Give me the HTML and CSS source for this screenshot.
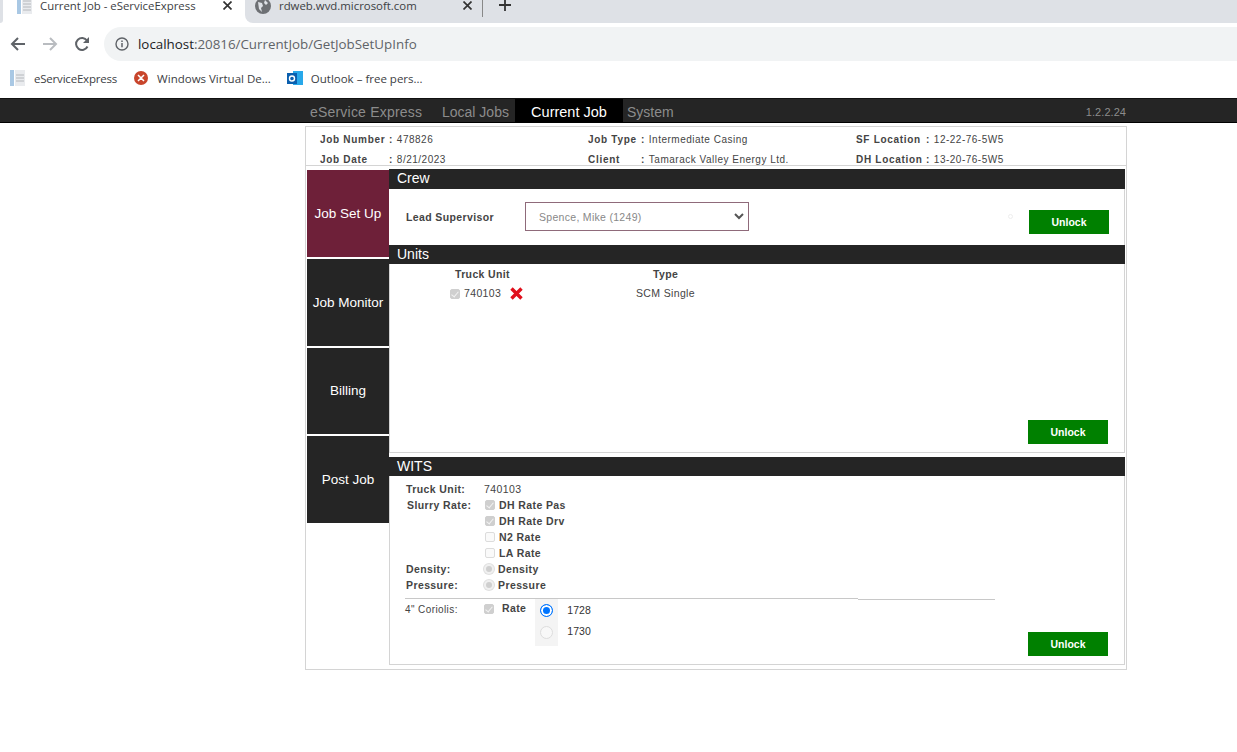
FILE: index.html
```html
<!DOCTYPE html>
<html lang="en">
<head>
  <meta charset="UTF-8">
  <title>Current Job - eServiceExpress</title>
  <link rel="stylesheet" href="styles.css">
</head>
<body>

  <div class="tabstrip">
    <span class="tab-edge"></span>
    <div class="tab active">
      <svg class="page-ico" width="15" height="18" viewBox="0 0 15 18"><rect x="0" y="0" width="4" height="18" fill="#a9c8e4"/><rect x="5" y="0" width="10" height="18" fill="#e9ebee"/><path d="M6 5h8M6 8h8M6 11h8M6 14h8" stroke="#b5b8bc"/></svg>
      <span class="tab-title">Current Job - eServiceExpress</span>
      <svg class="tab-x" width="9" height="9" viewBox="0 0 9 9"><path d="M.5.5l8 8M8.5.5l-8 8" stroke="#333" stroke-width="1.7"/></svg>
    </div>
    <div class="tab other">
      <svg class="globe" width="16" height="16" viewBox="0 0 16 16"><circle cx="8" cy="8" r="8" fill="#6d7074"/><path d="M3 4l4 1 1 3-2 2 1 4-3-3zM10 2l3 3-2 2-2-2z" fill="#dee1e6"/></svg>
      <span class="tab-title">rdweb.wvd.microsoft.com</span>
      <svg class="tab-x" width="9" height="9" viewBox="0 0 9 9"><path d="M.5.5l8 8M8.5.5l-8 8" stroke="#333" stroke-width="1.7"/></svg>
    </div>
    <div class="tab-rest">
      <span class="tab-sep"></span>
      <svg class="newtab" width="14" height="14" viewBox="0 0 14 14"><path d="M7 1v12M1 7h12" stroke="#333" stroke-width="1.8"/></svg>
    </div>
  </div>

  <div class="toolbar">
    <svg width="16" height="16" viewBox="0 0 16 16"><path d="M15 8H2M8 2L2 8l6 6" fill="none" stroke="#5f6368" stroke-width="2"/></svg>
    <svg width="16" height="16" viewBox="0 0 16 16"><path d="M1 8h13M8 2l6 6-6 6" fill="none" stroke="#b9bcc0" stroke-width="2"/></svg>
    <svg width="16" height="16" viewBox="0 0 16 16"><path d="M13.5 10.5A6 6 0 1 1 13 4.5" fill="none" stroke="#5f6368" stroke-width="2"/><path d="M15 1v6H9z" fill="#5f6368"/></svg>
    <div class="omnibox">
      <svg width="14" height="14" viewBox="0 0 14 14"><circle cx="7" cy="7" r="6" fill="none" stroke="#5f6368" stroke-width="1.4"/><path d="M7 6v4.2M7 3.4v1.5" stroke="#5f6368" stroke-width="1.5"/></svg>
      <span class="url"><b>localhost</b>:20816/CurrentJob/GetJobSetUpInfo</span>
    </div>
  </div>

  <div class="bookmarks">
    <span class="bm bm-first">
      <svg width="15" height="16" viewBox="0 0 15 16"><rect x="0" y="0" width="4" height="16" fill="#a9c8e4"/><rect x="5" y="0" width="10" height="16" fill="#e9ebee"/><path d="M6 5h8M6 8h8M6 11h8" stroke="#b5b8bc"/></svg>
      eServiceExpress
    </span>
    <span class="bm">
      <svg width="14" height="14" viewBox="0 0 14 14"><circle cx="7" cy="7" r="7" fill="#c8452b"/><path d="M4 4l3 3-3 3M10 4L7 7l3 3" fill="none" stroke="#fff" stroke-width="1.5"/></svg>
      Windows Virtual De...
    </span>
    <span class="bm bm-last">
      <svg width="16" height="16" viewBox="0 0 16 16"><rect x="6" y="1" width="10" height="14" fill="#28a8ea"/><rect x="0" y="3" width="10" height="11" fill="#0a5fae"/><circle cx="5" cy="8.5" r="2.5" fill="none" stroke="#fff" stroke-width="1.4"/></svg>
      Outlook – free pers...
    </span>
  </div>

  <nav class="appbar">
    <div class="appbar-inner">
      <a class="brand">eService Express</a>
      <a class="nav-local">Local Jobs</a>
      <a class="nav-current">Current Job</a>
      <a class="nav-system">System</a>
      <span class="version">1.2.2.24</span>
    </div>
  </nav>

  <div class="page">
    <div class="jobinfo">
      <div class="info-col col-a">
        <div class="info-row"><label>Job Number</label><i>:</i><span>478826</span></div>
        <div class="info-row"><label>Job Date</label><i>:</i><span>8/21/2023</span></div>
      </div>
      <div class="info-col col-b">
        <div class="info-row"><label>Job Type</label><i>:</i><span>Intermediate Casing</span></div>
        <div class="info-row"><label>Client</label><i>:</i><span>Tamarack Valley Energy Ltd.</span></div>
      </div>
      <div class="info-col col-c">
        <div class="info-row"><label>SF Location</label><i>:</i><span>12-22-76-5W5</span></div>
        <div class="info-row"><label>DH Location</label><i>:</i><span>13-20-76-5W5</span></div>
      </div>
    </div>

    <div class="main">
      <aside class="sidemenu">
        <a class="side-item selected">Job Set Up</a>
        <a class="side-item">Job Monitor</a>
        <a class="side-item">Billing</a>
        <a class="side-item">Post Job</a>
      </aside>

      <div class="panels">
        <section class="panel crew">
          <h3>Crew</h3>
          <div class="crew-body">
            <label class="lead-label">Lead Supervisor</label>
            <div class="fake-select">Spence, Mike (1249)
              <svg width="10" height="7" viewBox="0 0 10 7"><path d="M1 1l4 4 4-4" fill="none" stroke="#555" stroke-width="2"/></svg>
            </div>
            <span class="dot"></span>
            <button class="unlock">Unlock</button>
          </div>
        </section>

        <section class="panel units">
          <h3>Units</h3>
          <div class="units-body">
            <div class="units-grid">
              <b class="th-unit">Truck Unit</b>
              <b class="th-type">Type</b>
              <div class="unit-cell">
                <span class="chk on"></span>740103
                <svg class="red-x" width="13" height="13" viewBox="0 0 13 13"><path d="M1.5 1.5l10 10M11.5 1.5l-10 10" stroke="#e0101c" stroke-width="3.4"/></svg>
              </div>
              <div class="type-cell">SCM Single</div>
            </div>
            <div class="btn-row"><button class="unlock">Unlock</button></div>
          </div>
        </section>

        <section class="panel wits">
          <h3>WITS</h3>
          <div class="wits-body">
            <div class="wits-grid">
              <b class="w-label">Truck Unit:</b><span class="w-plain">740103</span>
              <b class="w-label w-slurry">Slurry Rate:</b><b class="w-opt"><span class="chk on"></span>DH Rate Pas</b>
              <span></span><b class="w-opt"><span class="chk on"></span>DH Rate Drv</b>
              <span></span><b class="w-opt"><span class="chk"></span>N2 Rate</b>
              <span></span><b class="w-opt"><span class="chk"></span>LA Rate</b>
              <b class="w-label">Density:</b><b class="w-opt"><span class="rad"></span>Density</b>
              <b class="w-label">Pressure:</b><b class="w-opt"><span class="rad"></span>Pressure</b>
            </div>
            <div class="rule"><span></span><span></span></div>
            <div class="coriolis">
              <span class="cor-label">4" Coriolis:</span>
              <span class="chk on"></span>
              <b class="cor-rate">Rate</b>
              <div class="radio-box">
                <span class="big-radio on"></span>
                <span class="big-radio"></span>
              </div>
              <div class="radio-names"><span>1728</span><span>1730</span></div>
              <button class="unlock">Unlock</button>
            </div>
          </div>
        </section>
      </div>
    </div>
  </div>

</body>
</html>
```

FILE: styles.css
```css
* {
  box-sizing: border-box;
}
body {
  margin: 0;
  background: #fff;
  font-family: "Liberation Sans", Arial, sans-serif;
  font-size: 11px;
  color: #333;
  overflow: hidden;
}

/* browser chrome */
.tabstrip {
  height: 23px;
  background: #fff;
  display: flex;
  align-items: center;
  font-family: "Open Sans", sans-serif;
  font-size: 11.4px;
  color: #3c4043;
}
.tab-edge {
  width: 3px;
  height: 23px;
  background: #dee1e6;
  border-radius: 0 0 3px 0;
}
.tab {
  height: 23px;
  display: flex;
  align-items: center;
}
.tab.active {
  width: 242px;
  padding-left: 14px;
}
.tab.other {
  width: 237px;
  padding-left: 10px;
  background: #dee1e6;
  border-radius: 0 0 0 8px;
}
.page-ico {
  margin-top: -13px;
}
.globe {
  margin-top: -12px;
}
.tab-title {
  margin-left: 8px;
  flex: 1;
  margin-top: -12px;
}
.tab-x {
  margin-top: -12px;
  margin-right: 13px;
}
.tab.other .tab-x {
  margin-right: 10px;
}
.tab-rest {
  flex: 1;
  height: 23px;
  background: #dee1e6;
  display: flex;
  align-items: center;
}
.tab-sep {
  width: 1px;
  height: 17px;
  background: #888;
  margin-top: -6px;
}
.newtab {
  margin-left: 15px;
  margin-top: -13px;
}
.toolbar {
  height: 42px;
  display: flex;
  align-items: center;
  padding-left: 10px;
  gap: 16px;
}
.omnibox {
  flex: 1;
  height: 34px;
  margin-left: -2px;
  background: #f1f3f4;
  border-radius: 17px 0 0 17px;
  display: flex;
  align-items: center;
  padding-left: 11px;
  gap: 9px;
}
.url {
  font-family: "Open Sans", sans-serif;
  font-size: 13.35px;
  color: #5f6368;
}
.url b {
  font-weight: normal;
  color: #202124;
}
.bookmarks {
  height: 33px;
  display: flex;
  align-items: center;
  padding-left: 10px;
  padding-bottom: 7px;
  font-family: "Open Sans", sans-serif;
  font-size: 11.5px;
  color: #3c4043;
}
.bm {
  display: flex;
  align-items: center;
  gap: 9px;
  margin-right: 16px;
}
.bm-first {
  letter-spacing: -0.2px;
  margin-right: 17px;
}
.bm-last {
  gap: 8px;
}

/* app navigation */
.appbar {
  height: 25px;
  background: #252525;
  border-top: 1px solid #111;
  border-bottom: 1px solid #000;
  font-size: 14px;
  color: #8c8c8c;
}
.appbar-inner {
  width: 822px;
  margin-left: 305px;
  height: 23px;
  display: flex;
  align-items: center;
}
.appbar-inner a {
  height: 23px;
  line-height: 26px;
}
.brand {
  padding-left: 5px;
  width: 137px;
  letter-spacing: 0.2px;
}
.nav-local {
  width: 73px;
}
.nav-current {
  width: 108px;
  background: #000;
  color: #fff;
  text-align: center;
  font-size: 14.5px;
}
.nav-system {
  padding-left: 4px;
}
.version {
  margin-left: auto;
  font-size: 11px;
  margin-right: 1px;
  padding-top: 3px;
  letter-spacing: 0.05px;
}

.page {
  width: 822px;
  height: 544px;
  margin: 3px 0 0 305px;
  border: 1px solid #d4d4d4;
}
.jobinfo {
  height: 39px;
  border-bottom: 1px solid #d4d4d4;
  display: flex;
  font-size: 10px;
  letter-spacing: 0.5px;
  color: #444;
  padding: 2px 0 0 14px;
}
.info-col {
  display: flex;
  flex-direction: column;
}
.col-a,
.col-b {
  width: 268px;
}
.info-row {
  height: 20px;
  flex: none;
  display: flex;
  align-items: center;
}
.info-row label {
  font-weight: bold;
  letter-spacing: 0.7px;
}
.info-row i {
  font-style: normal;
  font-weight: bold;
  margin: 0 4px 0 1px;
}
.col-a label {
  width: 68px;
}
.col-b label {
  width: 52px;
}
.col-c label {
  width: 69px;
}

.main {
  display: flex;
  padding-top: 3px;
}
.sidemenu {
  width: 82px;
  margin-left: 1px;
  padding-top: 1px;
  display: flex;
  flex-direction: column;
}
.side-item {
  height: 87px;
  margin-bottom: 2px;
  background: #252525;
  color: #fff;
  font-size: 13.5px;
  display: flex;
  align-items: center;
  justify-content: center;
}
.side-item:nth-child(3) {
  height: 86px;
  padding-bottom: 2px;
}
.side-item.selected {
  background: #6e2039;
}
.panels {
  width: 736px;
}
.panel h3 {
  margin: 0;
  height: 19px;
  background: #252525;
  color: #fff;
  font-size: 14px;
  font-weight: normal;
  line-height: 19px;
  padding-left: 8px;
}
.crew h3 {
  height: 20px;
}
.crew-body {
  height: 56px;
  display: flex;
  align-items: center;
  padding: 0 15px 1px 17px;
  border-right: 1px solid #d4d4d4;
}
.lead-label {
  width: 119px;
  font-weight: bold;
  font-size: 10.5px;
  letter-spacing: 0.38px;
  color: #444;
}
.fake-select {
  width: 224px;
  height: 29px;
  border: 1px solid #8f6a7a;
  padding: 0 4px 0 13px;
  display: flex;
  align-items: center;
  justify-content: space-between;
  color: #888;
  font-size: 10.5px;
  letter-spacing: 0.3px;
}
.dot {
  width: 5px;
  height: 5px;
  margin-left: auto;
  margin-right: 16px;
  border: 1px solid #eee;
  border-radius: 50%;
}
.unlock {
  width: 80px;
  height: 24px;
  background: #008000;
  color: #fff;
  border: none;
  font-family: "Liberation Sans", Arial, sans-serif;
  font-size: 10.5px;
  font-weight: bold;
  padding: 0;
  flex: none;
}
.crew .unlock {
  margin-top: 11px;
}
.units-body {
  height: 189px;
  border: 1px solid #d4d4d4;
  border-top: none;
  display: flex;
  flex-direction: column;
  justify-content: space-between;
}
.units-grid {
  display: grid;
  grid-template-columns: 245px 130px;
  font-size: 10.5px;
  letter-spacing: 0.35px;
  color: #444;
  padding: 3px 0 0 60px;
  row-gap: 4px;
}
.th-unit,
.th-type {
  line-height: 14px;
}
.th-unit {
  padding-left: 5px;
}
.th-type {
  margin-left: -42px;
}
.type-cell {
  margin-left: -59px;
  line-height: 17px;
}
.unit-cell {
  display: flex;
  align-items: center;
  line-height: 17px;
}
.unit-cell .chk {
  margin-right: 4px;
}
.chk {
  display: inline-block;
  position: relative;
  width: 10px;
  height: 10px;
  border: 1px solid #dcdcdc;
  background: #fafafa;
  border-radius: 2px;
  margin-right: 4px;
  flex: none;
}
.chk.on {
  background: #cfcfcf;
  border-color: #cfcfcf;
}
.chk.on::after {
  content: "";
  position: absolute;
  left: 2px;
  top: 0;
  width: 3px;
  height: 6px;
  border: solid #f2f2f2;
  border-width: 0 1.5px 1.5px 0;
  transform: rotate(40deg);
}
.red-x {
  margin-left: 9px;
}
.btn-row {
  display: flex;
  justify-content: flex-end;
  padding: 0 16px 8px 0;
}
.wits {
  margin-top: 4px;
}
.wits-body {
  height: 189px;
  border: 1px solid #d4d4d4;
  border-top: none;
  padding: 5px 0 0 15px;
}
.wits-grid {
  display: grid;
  grid-template-columns: 78px auto;
  grid-auto-rows: 16px;
  justify-content: start;
  align-items: center;
  font-size: 10.5px;
  letter-spacing: 0.4px;
  color: #444;
  padding-left: 1px;
}
.w-slurry {
  padding-left: 1px;
}
.w-opt {
  display: flex;
  align-items: center;
  padding-left: 1px;
}
.rad {
  width: 10px;
  height: 10px;
  border-radius: 50%;
  background: #cfcfcf;
  border: 2px solid #f0f0f0;
  box-shadow: 0 0 0 1px #e0e0e0;
  margin: 0 4px 0 -1px;
}
.rule {
  width: 590px;
  height: 2px;
  margin-top: 5px;
  display: flex;
}
.rule span:first-child {
  width: 453px;
  height: 1px;
  background: #c8c8c8;
}
.rule span:last-child {
  flex: 1;
  height: 1px;
  margin-top: 1px;
  background: #c8c8c8;
}
.coriolis {
  display: flex;
  align-items: flex-start;
  height: 66px;
  margin-top: -1px;
  font-size: 10px;
  letter-spacing: 0.4px;
  color: #444;
}
.cor-label {
  width: 79px;
  padding-top: 5px;
}
.coriolis > .chk {
  margin: 5px 0 0 0;
}
.cor-rate {
  margin: 3px 9px 0 8px;
  font-size: 10.5px;
  letter-spacing: 0.4px;
}
.radio-box {
  width: 23px;
  height: 47px;
  background: #f4f4f4;
  display: flex;
  flex-direction: column;
  align-items: center;
  gap: 9px;
  padding-top: 5px;
}
.big-radio {
  width: 13px;
  height: 13px;
  border-radius: 50%;
  border: 1px solid #ddd;
  background: #f8f8f8;
}
.big-radio.on {
  border: 1.5px solid #0075ff;
  background: #0075ff;
  box-shadow: inset 0 0 0 2px #fff;
}
.radio-names {
  margin: 5px 0 0 9px;
  display: flex;
  flex-direction: column;
  gap: 9px;
  font-size: 10.5px;
  line-height: 12px;
  letter-spacing: 0;
  color: #333;
}
.coriolis .unlock {
  margin: 33px 16px 0 auto;
}
```
